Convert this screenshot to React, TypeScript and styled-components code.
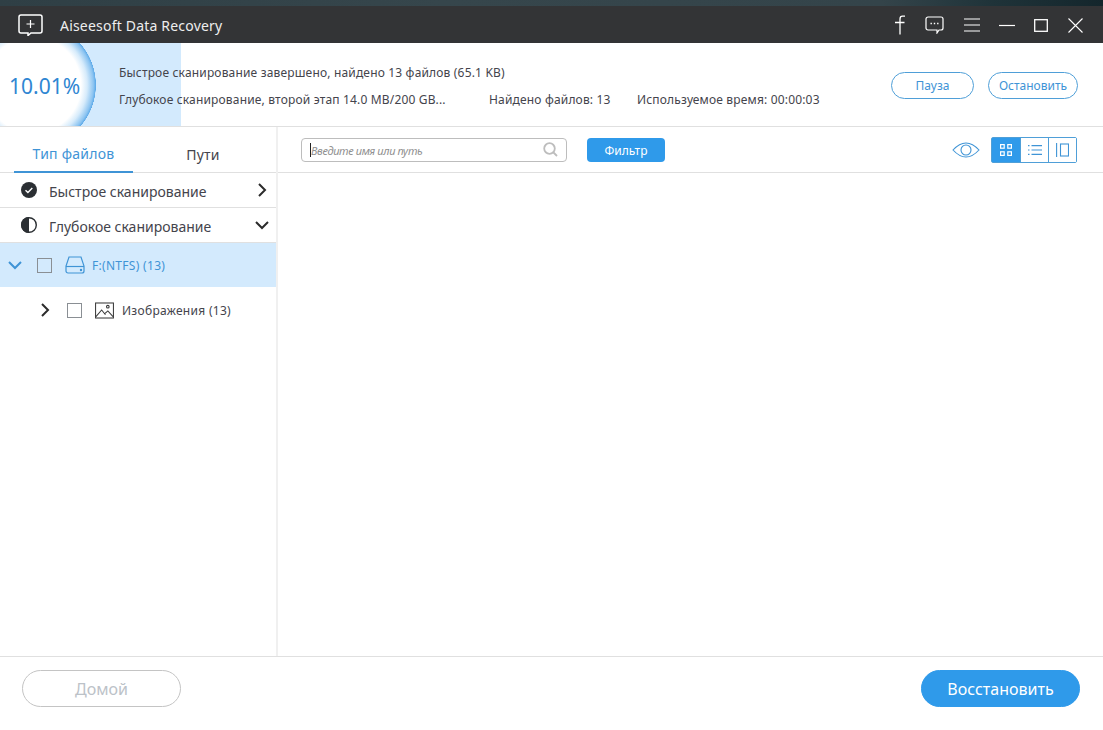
import { createGlobalStyle, styled } from "styled-components";

const Global = createGlobalStyle`
  html, body {
    margin: 0;
    padding: 0;
    height: 100%;
    background: #fff;
  }
  #root {
    height: 100%;
  }
  * {
    box-sizing: border-box;
  }
`;

const Page = styled.div`
  display: flex;
  flex-direction: column;
  width: 1103px;
  height: 730px;
  overflow: hidden;
  font-family: "Noto Sans", "Open Sans", sans-serif;
  color: #44444c;
`;

const Wallpaper = styled.div`
  height: 6px;
  background: linear-gradient(90deg, #2f3f45, #36464c 40%, #34444a 80%, #1f3339 90%, #14262c);
`;

const TitleBar = styled.div`
  display: flex;
  align-items: center;
  height: 37px;
  padding: 1px 10px 0 18px;
  background: #333436;
  color: #fff;
`;

const AppTitle = styled.div`
  margin-left: 17px;
  font-size: 14px;
  letter-spacing: 0.2px;
  color: #eee;
  flex: 1;
`;

const WindowIcons = styled.div`
  display: flex;
  align-items: center;
`;

const WindowIcon = styled.div<{ $after?: number }>`
  display: flex;
  align-items: center;
  justify-content: center;
  width: 34.6px;
  height: 36px;
  margin-right: ${(p) => p.$after ?? 0}px;
`;

const Header = styled.div`
  position: relative;
  display: flex;
  align-items: center;
  height: 84px;
  border-bottom: 1px solid #e0e0e0;
`;

const ProgressBack = styled.div`
  position: absolute;
  left: 0;
  top: 0;
  bottom: 0;
  width: 181px;
  background: radial-gradient(circle 63px at 33px 42px, #fff 0, #fff 76%, #d6ebfb 86%, #8cc4f1 96%, #5fabe9 99.5%, #d3eafd 100%);
`;

const Percent = styled.div`
  position: relative;
  width: 119px;
  padding: 2px 0 0 9px;
  font-size: 21px;
  color: #2f86d2;
`;

const Lines = styled.div`
  position: relative;
  flex: 1;
  display: flex;
  flex-direction: column;
  gap: 9px;
  padding-top: 4px;
  font-size: 12px;
  line-height: 18px;
  letter-spacing: 0.17px;
`;

const Line = styled.div`
  display: flex;
`;

const Cell = styled.span<{ $width?: number }>`
  width: ${(p) => (p.$width ? `${p.$width}px` : "auto")};
  white-space: nowrap;
`;

const HeaderButtons = styled.div`
  display: flex;
  gap: 14px;
  padding-right: 25px;
  margin-top: 1px;
`;

const OutlineButton = styled.div<{ $width: number }>`
  display: flex;
  align-items: center;
  justify-content: center;
  width: ${(p) => p.$width}px;
  height: 27px;
  border: 1px solid #4f9fd8;
  border-radius: 14px;
  font-size: 12px;
  color: #3f94d6;
`;

const Main = styled.div`
  flex: 1;
  display: flex;
  min-height: 0;
`;

const Sidebar = styled.div`
  width: 278px;
  border-right: 2px solid #f0f0f0;
`;

const Tabs = styled.div`
  display: flex;
  height: 46px;
  padding-left: 14px;
  border-bottom: 1px solid #e0e0e0;
`;

const Tab = styled.div<{ $active?: boolean; $width: number }>`
  display: flex;
  align-items: center;
  justify-content: center;
  width: ${(p) => p.$width}px;
  height: 46px;
  padding-top: 9px;
  font-size: 14px;
  letter-spacing: 0.25px;
  color: ${(p) => (p.$active ? "#3f94d6" : "#44444c")};
  border-bottom: ${(p) => (p.$active ? "2px solid #3f94d6" : "none")};
`;

const ScanRow = styled.div`
  display: flex;
  align-items: center;
  height: 35px;
  padding: 0 6px 0 21px;
  border-bottom: 1px solid #e0e0e0;
  font-size: 14px;
`;

const ScanLabel = styled.span`
  flex: 1;
  margin-left: 12px;
  padding-top: 2px;
`;

const TreeRow = styled.div<{ $selected?: boolean; $indent: number }>`
  display: flex;
  align-items: center;
  height: ${(p) => (p.$selected ? 44 : 46)}px;
  padding-left: ${(p) => p.$indent}px;
  background: ${(p) => (p.$selected ? "#d3eafd" : "transparent")};
  color: ${(p) => (p.$selected ? "#3f94d6" : "#44444c")};
  font-size: 12px;
  letter-spacing: 0.3px;
`;

const Check = styled.span`
  width: 15px;
  height: 15px;
  margin: 0 13px 0 14px;
  border: 1px solid #8a8f94;
  background: transparent;
`;

const TreeLabel = styled.span<{ $gap: number }>`
  margin-left: ${(p) => p.$gap}px;
`;

const Content = styled.div`
  flex: 1;
`;

const Toolbar = styled.div`
  display: flex;
  align-items: center;
  height: 46px;
  padding: 0 26px 0 23px;
  border-bottom: 1px solid #e0e0e0;
`;

const Search = styled.div`
  display: flex;
  align-items: center;
  width: 266px;
  height: 24px;
  padding: 0 8px;
  border: 1px solid #bdbdbd;
  border-radius: 4px;
`;

const Caret = styled.span`
  width: 1px;
  height: 14px;
  background: #222;
`;

const Placeholder = styled.span`
  flex: 1;
  padding-top: 2px;
  font-size: 11px;
  font-style: italic;
  letter-spacing: -0.35px;
  color: #8f8f8f;
`;

const FilterButton = styled.div`
  display: flex;
  align-items: center;
  justify-content: center;
  width: 78px;
  height: 24px;
  margin-left: 20px;
  padding-top: 2px;
  border-radius: 4px;
  background: #2f9aea;
  color: #fff;
  font-size: 12px;
`;

const Spacer = styled.div`
  flex: 1;
`;

const ViewGroup = styled.div`
  display: flex;
  height: 26px;
  margin-left: 11px;
  border: 1px solid #4f9fd8;
  border-radius: 2px;
`;

const ViewButton = styled.div<{ $active?: boolean }>`
  display: flex;
  align-items: center;
  justify-content: center;
  width: 28px;
  background: ${(p) => (p.$active ? "#2f9aea" : "#fff")};
  color: ${(p) => (p.$active ? "#fff" : "#3f94d6")};
  & + & {
    border-left: 1px solid #4f9fd8;
  }
`;

const Footer = styled.div`
  display: flex;
  align-items: center;
  justify-content: space-between;
  height: 74px;
  padding: 0 23px 10px 22px;
  border-top: 1px solid #e0e0e0;
`;

const FooterButton = styled.div<{ $primary?: boolean }>`
  display: flex;
  align-items: center;
  justify-content: center;
  width: 159px;
  height: 37px;
  border-radius: 19px;
  font-size: 16px;
  border: 1px solid ${(p) => (p.$primary ? "#2f9aea" : "#c4c4c4")};
  background: ${(p) => (p.$primary ? "#2f9aea" : "#fff")};
  color: ${(p) => (p.$primary ? "#fff" : "#bcc2c8")};
`;

function Chevron({ dir, color = "#2b2b2b" }: { dir: "right" | "down"; color?: string }) {
  return (
    <svg width="16" height="16" viewBox="0 0 16 16" fill="none" stroke={color} strokeWidth="2">
      <path d={dir === "right" ? "M5 2l6 6-6 6" : "M2 5l6 6 6-6"} />
    </svg>
  );
}

export default function App() {
  return (
    <Page>
      <Global />
      <Wallpaper />
      <TitleBar>
        <svg width="25" height="22" viewBox="0 0 25 22" fill="none" stroke="#fff" strokeWidth="1.5">
          <path d="M3 1h19a2 2 0 0 1 2 2v14a2 2 0 0 1-2 2H13l-3 2.5V19H3a2 2 0 0 1-2-2V3a2 2 0 0 1 2-2z" />
          <path d="M12.5 6v8M8.5 10h8" strokeWidth="1.2" />
        </svg>
        <AppTitle>Aiseesoft Data Recovery</AppTitle>
        <WindowIcons>
          <WindowIcon>
            <svg width="12" height="20" viewBox="0 0 12 20" fill="none" stroke="#fff" strokeWidth="1.3">
              <path d="M11 1.2H8.5Q6 1.2 6 4v15.5M1 7.5h9.5" />
            </svg>
          </WindowIcon>
          <WindowIcon $after={2.5}>
            <svg width="19" height="18" viewBox="0 0 19 18" fill="none" stroke="#fff" strokeWidth="1.2">
              <path d="M3 1h13a2 2 0 0 1 2 2v9a2 2 0 0 1-2 2h-2l-2 3v-3H3a2 2 0 0 1-2-2V3a2 2 0 0 1 2-2z" />
              <path d="M5.5 7.5h1.4M8.8 7.5h1.4M12.1 7.5h1.4" strokeWidth="1.6" />
            </svg>
          </WindowIcon>
          <WindowIcon>
            <svg width="16" height="14" viewBox="0 0 16 14" stroke="#fff" strokeWidth="1.2">
              <path d="M0 1h16M0 7h16M0 13h16" />
            </svg>
          </WindowIcon>
          <WindowIcon>
            <svg width="16" height="14" viewBox="0 0 16 14" stroke="#fff" strokeWidth="1.2">
              <path d="M0 7.5h16" />
            </svg>
          </WindowIcon>
          <WindowIcon>
            <svg width="14" height="13" viewBox="0 0 14 13" fill="none" stroke="#fff" strokeWidth="1.3">
              <rect x="0.7" y="0.7" width="12.6" height="11.6" />
            </svg>
          </WindowIcon>
          <WindowIcon>
            <svg width="15" height="15" viewBox="0 0 15 15" stroke="#fff" strokeWidth="1.1">
              <path d="M0.5 0.5l14 14M14.5 0.5l-14 14" />
            </svg>
          </WindowIcon>
        </WindowIcons>
      </TitleBar>

      <Header>
        <ProgressBack />
        <Percent>10.01%</Percent>
        <Lines>
          <Line>Быстрое сканирование завершено, найдено 13 файлов (65.1 KB)</Line>
          <Line>
            <Cell $width={370}>Глубокое сканирование, второй этап 14.0 MB/200 GB...</Cell>
            <Cell $width={148}>Найдено файлов: 13</Cell>
            <Cell>Используемое время: 00:00:03</Cell>
          </Line>
        </Lines>
        <HeaderButtons>
          <OutlineButton $width={83}>Пауза</OutlineButton>
          <OutlineButton $width={90}>Остановить</OutlineButton>
        </HeaderButtons>
      </Header>

      <Main>
        <Sidebar>
          <Tabs>
            <Tab $active $width={119}>Тип файлов</Tab>
            <Tab $width={140}>Пути</Tab>
          </Tabs>
          <ScanRow>
            <svg width="16" height="16" viewBox="0 0 16 16">
              <circle cx="8" cy="8" r="8" fill="#2b2f33" />
              <path d="M4.5 8.2l2.4 2.3 4.4-4.6" fill="none" stroke="#fff" strokeWidth="1.4" />
            </svg>
            <ScanLabel>Быстрое сканирование</ScanLabel>
            <Chevron dir="right" />
          </ScanRow>
          <ScanRow>
            <svg width="16" height="16" viewBox="0 0 16 16">
              <circle cx="8" cy="8" r="7.3" fill="#fff" stroke="#2b2f33" strokeWidth="1.4" />
              <path d="M8 0a8 8 0 0 0 0 16z" fill="#2b2f33" />
            </svg>
            <ScanLabel>Глубокое сканирование</ScanLabel>
            <Chevron dir="down" />
          </ScanRow>
          <TreeRow $selected $indent={7}>
            <Chevron dir="down" color="#3f94d6" />
            <Check />
            <svg width="20" height="18" viewBox="0 0 20 18" fill="none" stroke="#3f94d6" strokeWidth="1.2">
              <path d="M4 1h12l3 9v5a2 2 0 0 1-2 2H3a2 2 0 0 1-2-2v-5z" />
              <path d="M1 10.5h18" />
              <circle cx="16" cy="14" r="0.6" />
            </svg>
            <TreeLabel $gap={7}>F:(NTFS) (13)</TreeLabel>
          </TreeRow>
          <TreeRow $indent={37}>
            <Chevron dir="right" />
            <Check />
            <svg width="19" height="17" viewBox="0 0 20 17" fill="none" stroke="#3a3a3a" strokeWidth="1.1">
              <rect x="0.6" y="0.6" width="18.8" height="15.8" />
              <path d="M1 15l6-7 4 5M10 12l3.5-3 5.5 6" />
              <circle cx="13.5" cy="4.5" r="1.4" />
            </svg>
            <TreeLabel $gap={8}>Изображения (13)</TreeLabel>
          </TreeRow>
        </Sidebar>
        <Content>
          <Toolbar>
            <Search>
              <Caret />
              <Placeholder>Введите имя или путь</Placeholder>
              <svg width="15" height="15" viewBox="0 0 15 15" fill="none" stroke="#bdbdbd" strokeWidth="1.8">
                <circle cx="6.5" cy="6.5" r="5.3" />
                <path d="M10.5 10.5l3.5 3.5" />
              </svg>
            </Search>
            <FilterButton>Фильтр</FilterButton>
            <Spacer />
            <svg width="28" height="18" viewBox="0 0 28 18" fill="none" stroke="#3f94d6" strokeWidth="1.1">
              <path d="M1 9Q14-5 27 9Q14 23 1 9z" />
              <circle cx="14" cy="9" r="5" />
            </svg>
            <ViewGroup>
              <ViewButton $active>
                <svg width="12" height="12" viewBox="0 0 12 12" fill="none" stroke="currentColor" strokeWidth="1.2">
                  <rect x="0.6" y="0.6" width="3.6" height="3.6" />
                  <rect x="7.8" y="0.6" width="3.6" height="3.6" />
                  <rect x="0.6" y="7.8" width="3.6" height="3.6" />
                  <rect x="7.8" y="7.8" width="3.6" height="3.6" />
                </svg>
              </ViewButton>
              <ViewButton>
                <svg width="14" height="10" viewBox="0 0 14 10" stroke="currentColor" strokeWidth="1.1">
                  <path d="M3.5 0.6H14M3.5 5H14M3.5 9.4H14M0 0.6h1.5M0 5h1.5M0 9.4h1.5" />
                </svg>
              </ViewButton>
              <ViewButton>
                <svg width="13" height="14" viewBox="0 0 13 14" fill="none" stroke="currentColor" strokeWidth="1.1">
                  <path d="M0.6 0v14" />
                  <rect x="4.5" y="1" width="8" height="12" />
                </svg>
              </ViewButton>
            </ViewGroup>
          </Toolbar>
        </Content>
      </Main>

      <Footer>
        <FooterButton>Домой</FooterButton>
        <FooterButton $primary>Восстановить</FooterButton>
      </Footer>
    </Page>
  );
}
